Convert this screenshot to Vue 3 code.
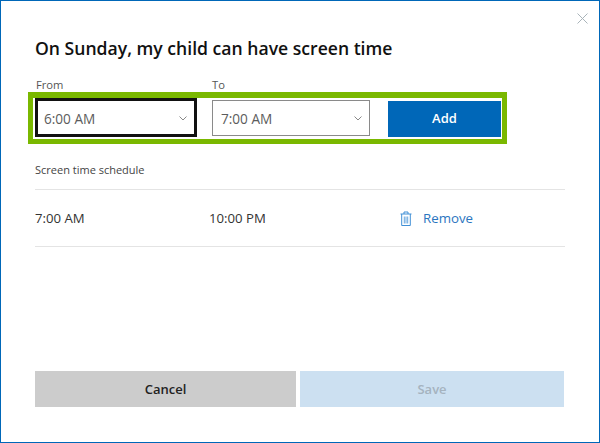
<script setup>
const schedule = [{ from: '7:00 AM', to: '10:00 PM' }]
</script>

<template>
  <div class="dialog">
    <button class="close" aria-label="Close">
      <svg width="11" height="11" viewBox="0 0 11 11"><path d="M.5.500l10 10M10.500.500l-10 10" stroke="#a9b4ba" stroke-width="1" fill="none" /></svg>
    </button>
    <h1 class="title">On Sunday, my child can have screen time</h1>
    <div class="labels">
      <span class="label from">From</span>
      <span class="label">To</span>
    </div>
    <div class="picker">
      <div class="select focused">
        <span>6:00 AM</span>
        <svg class="chev" width="8" height="5" viewBox="0 0 8 5"><path d="M.5.500L4 4 7.500.500" stroke="#888" fill="none" /></svg>
      </div>
      <div class="select plain">
        <span>7:00 AM</span>
        <svg class="chev" width="8" height="5" viewBox="0 0 8 5"><path d="M.5.500L4 4 7.500.500" stroke="#888" fill="none" /></svg>
      </div>
      <button class="add">Add</button>
    </div>
    <div class="heading">Screen time schedule</div>
    <div v-for="row in schedule" :key="row.from" class="row">
      <span class="c1">{{ row.from }}</span>
      <span class="c2">{{ row.to }}</span>
      <svg class="trash" width="12" height="15" viewBox="0 0 12 15" fill="none" stroke="#3f8fd6">
        <path d="M.5 3h11M4 3V1h4v2M1.700 3v11.500h8.600V3" />
        <path d="M4.300 5.500v7M6 5.500v7M7.700 5.500v7" stroke-width=".8" />
      </svg>
      <a class="remove">Remove</a>
    </div>
    <div class="footer">
      <button class="btn cancel">Cancel</button>
      <button class="btn save">Save</button>
    </div>
  </div>
</template>

<style>
body { margin: 0; }
</style>

<style scoped>
.dialog {
  position: relative;
  box-sizing: border-box;
  width: 600px;
  height: 443px;
  border: 1px solid #0067b8;
  background: #fff;
  font-family: "Open Sans", "Noto Sans", sans-serif;
  display: flex;
  flex-direction: column;
  padding: 0 34px;
  overflow: hidden;
}
.close {
  position: absolute;
  top: 12px;
  right: 11px;
  padding: 0;
  border: 0;
  background: none;
  line-height: 0;
}
.title {
  margin: 35px 0 0;
  font-size: 17.6px;
  line-height: 24px;
  font-weight: 600;
  color: #111;
}
.labels {
  display: flex;
  margin-top: 18px;
  padding-left: 1px;
  height: 14px;
  font-size: 11.2px;
  line-height: 14px;
  color: #555;
}
.label.from { width: 176px; }
.picker {
  box-sizing: border-box;
  margin: 0 0 0 -7px;
  width: 479px;
  height: 52px;
  border: 5px solid #7ab800;
  border-top-width: 6px;
  padding: 0 0 0 2px;
  display: flex;
  align-items: flex-start;
}
.select {
  box-sizing: border-box;
  display: flex;
  align-items: center;
  justify-content: space-between;
  font-size: 13.6px;
  color: #5c5c5c;
  background: #fff;
}
.select.focused {
  width: 162px;
  height: 39px;
  border: 3px solid #111;
  padding: 1px 7px 0 6px;
  margin-right: 15px;
}
.select.plain {
  width: 158px;
  height: 36px;
  margin-top: 2px;
  border: 1px solid #8a8a8a;
  padding: 0 7px 0 8px;
  margin-right: 18px;
}
.add {
  width: 113px;
  height: 36px;
  margin-top: 3px;
  border: 0;
  background: #0067b8;
  color: #fff;
  font: 600 13px "Open Sans", "Noto Sans", sans-serif;
  padding: 0 0 2px;
}
.heading {
  margin-top: 18px;
  height: 27px;
  font-size: 11px;
  line-height: 16px;
  color: #444;
  border-bottom: 1px solid #e4e4e4;
  width: 530px;
}
.row {
  display: flex;
  align-items: center;
  width: 530px;
  height: 56px;
  border-bottom: 1px solid #e4e4e4;
  font-size: 13.2px;
  color: #333;
}
.c1 { width: 174px; }
.c2 { width: 191px; }
.trash { margin-right: 11px; }
.remove { color: #2a75c0; font-size: 13.3px; }
.footer {
  display: flex;
  gap: 4px;
  margin-top: 124px;
}
.btn {
  width: 261px;
  height: 36px;
  border: 0;
  padding: 0;
  font: 600 13px "Open Sans", "Noto Sans", sans-serif;
}
.btn.cancel { background: #ccc; color: #222; }
.btn.save { background: #cce0f1; color: #a5b3bf; width: 264px; }
</style>
